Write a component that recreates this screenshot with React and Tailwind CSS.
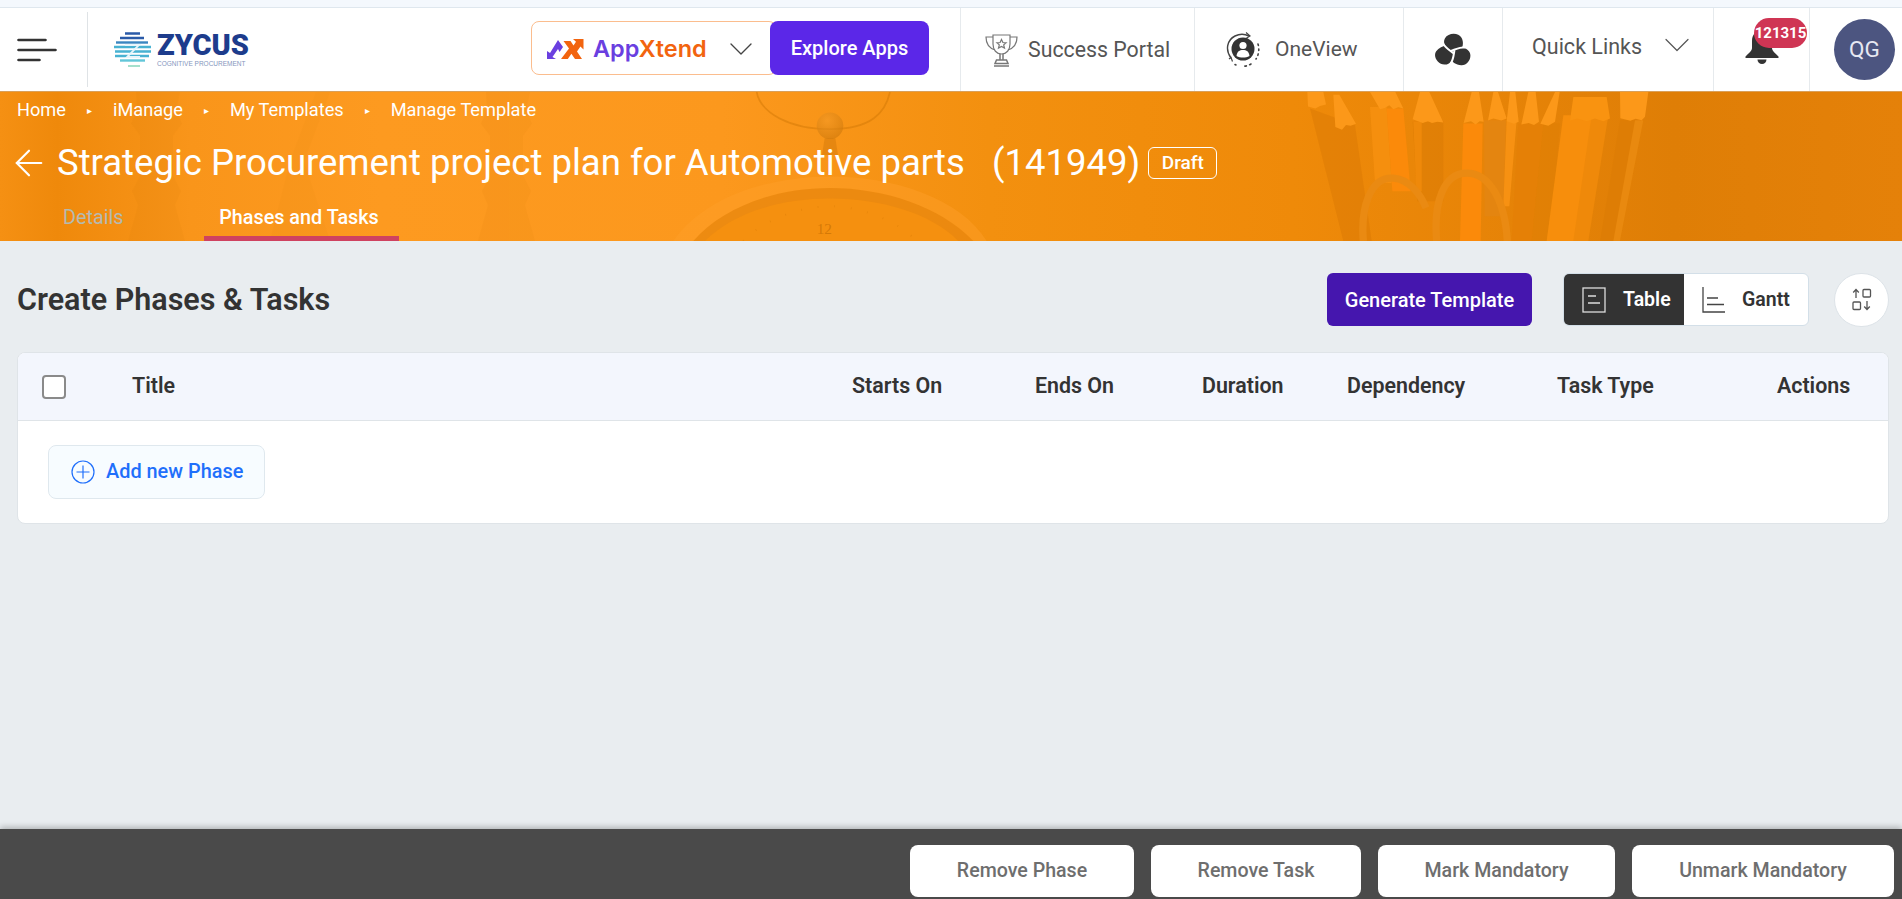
import React from "react";
import { ChevronDown, ArrowLeft } from "lucide-react";

const Hamburger = () => (
  <svg width="40" height="24" viewBox="0 0 40 24" fill="none" stroke="#333" strokeWidth="2.6" strokeLinecap="round">
    <path d="M1.5 2h27M1.5 12h37M1.5 22h21" />
  </svg>
);

const ZycusMark = () => (
  <svg width="38" height="36" viewBox="0 0 38 36" fill="none" strokeWidth="2.4">
    <path d="M11 1.5h15M6 6h24" stroke="#2a5aa8" />
    <path d="M2 10.5h32" stroke="#3a86c0" />
    <path d="M0 15h37M1 19.5h36M1 24h34" stroke="#48b2d2" />
    <path d="M6 28.5h25" stroke="#62c6d8" />
    <path d="M14 34h12" stroke="#a5e0cc" strokeWidth="2" />
    <path d="M11 13h14L13 25h13" stroke="#e8f6fb" strokeWidth="1.8" />
  </svg>
);

const AxMark = () => (
  <svg width="37" height="23" viewBox="0 0 37 23">
    <path d="M0 22V14l3 2L11 3l5 7-3.4 5L11 12 5.5 20 9 22z" fill="#6a3fe0" />
    <path d="M14 22l8-10.5L16.5 4h7l3 4.4L29 4.8 26 2h10.5v10.5L33.4 9.6 30 14.5 35 22h-7l-3.6-5.2L20.8 22z" fill="#f2640f" />
  </svg>
);

const Trophy = () => (
  <svg width="33" height="34" viewBox="0 0 33 34" fill="none" stroke="#777" strokeWidth="1.2">
    <path d="M8 2h17v9c0 6-3.5 10-8.5 10S8 17 8 11z" />
    <path d="M8 4H1c0 7 3 11 9 13M25 4h7c0 7-3 11-9 13" />
    <path d="M16.5 6.5l1.4 3 3.2.3-2.4 2.1.8 3.2-3-1.7-3 1.7.8-3.2-2.4-2.1 3.2-.3z" />
    <path d="M15 21v6h3v-6M11.5 27h10l1.5 3.5H10zM9 33h15" strokeWidth="1.5" />
  </svg>
);

const OneViewIcon = () => (
  <svg width="36" height="36" viewBox="0 0 36 36" fill="none">
    <path d="M6 26C0 18 2 8 10 4c5-2.500 10-2 14 0" stroke="#444" strokeWidth="1.4" />
    <path d="M21 .5L25 4l-4 2.500" stroke="#444" strokeWidth="1.2" />
    <path d="M4 27l2-1.500 1.500 4" stroke="#444" strokeWidth="1.2" />
    <circle cx="18" cy="17" r="11.500" fill="#333" />
    <circle cx="18" cy="13.500" r="3.600" fill="#fff" />
    <path d="M11.500 24c.5-4.500 3-6 6.500-6s6 1.500 6.500 6c-4 2-9 2-13 0z" fill="#fff" />
    <path d="M33 12c1.500 5 .8 11-2 15M26 32c-3 1.800-6 2.400-9 2.200M11 33l-1-.5" stroke="#444" strokeWidth="1.6" strokeDasharray="1.500 3.500" strokeLinecap="round" />
  </svg>
);

const petal = "M18 19.500C11.500 17.500 7 11 10 5.500 13-.5 23.500-1 26.500 5c2.500 4.800 1.500 10.500-1.500 14-2.300-1.800-5-1.500-7 .5z";
const cut = "M18.500 21.500C15 18.500 10.500 16 8 11";
const Swirl = () => (
  <svg width="37" height="34" viewBox="0 0 37 36" preserveAspectRatio="none" fill="#333">
    <path d={petal} />
    <path d={petal} transform="rotate(120 18 19.500)" />
    <path d={petal} transform="rotate(240 18 19.500)" />
    <g fill="none" stroke="#fff" strokeWidth="2">
      <path d={cut} />
      <path d={cut} transform="rotate(120 18 19.500)" />
      <path d={cut} transform="rotate(240 18 19.500)" />
    </g>
  </svg>
);

const Bell = () => (
  <svg width="34" height="34" viewBox="0 0 34 34" fill="#333">
    <path d="M17 0c6.500 0 10 5 10 11v7c0 3 3 5 6.500 8.500V28H.5v-1.500C4 23 7 21 7 18v-7C7 5 10.500 0 17 0z" />
    <path d="M12.500 29.500h9a4.500 4.500 0 0 1-9 0z" />
  </svg>
);

const TableIcon = () => (
  <svg width="24" height="26" viewBox="0 0 24 26" fill="none" stroke="#ddd" strokeWidth="1.300">
    <rect x="1" y="1" width="22" height="24" />
    <path d="M6 9h8M6 16h12" />
  </svg>
);

const GanttIcon = () => (
  <svg width="23" height="26" viewBox="0 0 23 26" fill="none" stroke="#444" strokeWidth="1.300">
    <path d="M1 0v25h22M5 11h11M5 17.500h17" />
  </svg>
);

const SortIcon = () => (
  <svg width="20" height="23" viewBox="0 0 20 23" fill="none" stroke="#555" strokeWidth="1.300">
    <path d="M4 10V2M1.200 4.500L4 1.500l2.800 3" />
    <rect x="11" y="1.500" width="7.500" height="7.500" rx="1" />
    <rect x="1" y="14" width="7.500" height="7.500" rx="1" />
    <path d="M15 13v8M12.200 18.500l2.800 3 2.800-3" />
  </svg>
);

const PlusCircle = () => (
  <svg width="24" height="24" viewBox="0 0 24 24" fill="none" stroke="#1f6ffb" strokeWidth="1.200">
    <circle cx="12" cy="12" r="11" />
    <path d="M12 5.500v13M5.500 12h13" />
  </svg>
);

const BannerArt = () => (
  <svg className="absolute inset-0 h-full w-full" viewBox="0 0 1902 150" preserveAspectRatio="none" fill="none">
    <defs>
      <radialGradient id="knob" cx="0.4" cy="0.3" r="0.8">
        <stop offset="0" stopColor="#f39a28" />
        <stop offset="1" stopColor="#c97408" />
      </radialGradient>
    </defs>
    <g fill="#c96f00" opacity="0.07">
      <path d="M136 0h44l-4 18 6 14-9 12v40l8 16-6 14 10 36H128l10-36-6-14 8-16V44l-9-12 6-14z" />
      <path d="M486 0h44l-4 18 6 14-9 12v40l8 16-6 14 10 36H478l10-36-6-14 8-16V44l-9-12 6-14z" />
      <path d="M290 70l26-70h14l-26 70 26 80h-60z" opacity="0.6" />
    </g>

    {/* clock: coordinates of a 3x crop starting at x=660 */}
    <g transform="translate(660 0) scale(0.33333)">
      <path d="M290 0c12 62 95 112 220 112S676 62 690 0" stroke="#d27806" strokeOpacity="0.5" strokeWidth="5" />
      <path d="M494 140h32l8 50h-48z" fill="#d47a0a" fillOpacity="0.5" />
      <circle cx="510" cy="102" r="40" fill="url(#knob)" fillOpacity="0.6" />
      <path d="M40 450C130 320 320 255 510 255s390 65 470 195z" fill="#ffa02a" fillOpacity="0.45" />
      <path d="M100 450C190 345 350 290 510 290s330 55 430 160z" fill="#e38107" fillOpacity="0.6" />
      <path d="M135 450C220 365 360 322 510 322s300 43 385 128z" fill="#f5900f" />
      <path d="M250 450C300 395 410 345 510 345s210 50 260 105" stroke="#d97c06" strokeOpacity="0.5" strokeWidth="6" strokeDasharray="2 48" />
      <text x="470" y="430" fill="#cd7304" fillOpacity="0.8" fontSize="46" fontFamily="Liberation Serif, serif">12</text>
    </g>

    {/* pencils and clips: coordinates of a 3x crop starting at x=1280 */}
    <g transform="translate(1280 0) scale(0.33333)">
      <path d="M90 50l135 50 50 350H190z" fill="#df7e05" fillOpacity="0.7" />
      <path d="M270 45h50l15 230-50 0z" fill="#fb9412" fillOpacity="0.6" />
      <path d="M320 50h50l22 250h-55z" fill="#fb8a0a" />
      <path d="M398 90h92v240h-78z" fill="#de7d05" fillOpacity="0.75" />
      <path d="M400 90h25v210h-16z" fill="#f8900e" fillOpacity="0.6" />
      <path d="M550 95h58l-6 355h-62z" fill="#fb8a0a" />
      <path d="M612 85h66l-8 290h-56z" fill="#e48510" />
      <path d="M680 85h30l-22 260h-18z" fill="#fb9515" fillOpacity="0.8" />
      <path d="M715 95h75l-35 355h-60z" fill="#e58006" fillOpacity="0.8" />
      <path d="M790 95h50l-30 355h-55z" fill="#e07e05" fillOpacity="0.6" />
      <path d="M850 70h130L920 450H800z" fill="#f78e0c" />
      <path d="M935 70h50l-60 380h-45z" fill="#ef890a" />
      <path d="M1020 85h70l-70 365h-60z" fill="#de7d05" />
      <path d="M1065 85h25l-70 365h-20z" fill="#e9890f" />
      <g fill="#fc9819">
        <path d="M82 0h48l8 38-18 4-14 8-22-6z" />
        <path d="M160 8l18 0 50 88-16 6-14-2-12 14-20-8z" />
        <path d="M270 0h76l24 50-15-4-15 6-12-12-14 8-14 4z" />
        <path d="M420 0h28l42 92-18-2-16 4-12-6-16 6-30-12z" />
        <path d="M575 0h22l14 90-12-2-12 10-14-10-22 6z" />
        <path d="M640 0h14l26 80-16 6-24-6-16 6z" />
        <path d="M690 0h16l10 90-14 6-22-8z" />
        <path d="M745 0h22l10 90-15 10-16-6-22 4z" />
        <path d="M825 0h14l-14 90-20 12-24-6z" />
        <path d="M880 15h100l10 65-20 8-25-8-25 8-28-8-22 6z" fill="#f99310" />
        <path d="M1020 0h85l-10 75-10 10-18-4-16 6-30-8z" />
      </g>
      <path d="M250 450c-8-100 20-195 90-190 45 3 80 45 98 90" stroke="#ea8a12" strokeWidth="22" />
      <path d="M470 450c-10-115 20-205 90-205 70 0 115 85 122 205" stroke="#ea8a12" strokeWidth="22" />
    </g>
  </svg>
);

const columns = ["Starts On", "Ends On", "Duration", "Dependency", "Task Type", "Actions"];
const crumbs = ["Home", "iManage", "My Templates", "Manage Template"];
const footerButtons = [
  ["Remove Phase", "w-[224px]"],
  ["Remove Task", "w-[210px]"],
  ["Mark Mandatory", "w-[237px]"],
  ["Unmark Mandatory", "w-[262px]"],
];

export default function App() {
  return (
    <div className="flex h-screen flex-col overflow-hidden bg-[#e9edf0] font-['Roboto',sans-serif] text-[#333]">
      <div className="h-[8px] shrink-0 border-b border-[#dfe7ee] bg-[#f4f8fd]" />

      <header className="flex h-[83px] shrink-0 items-stretch bg-white">
        <div className="flex w-[87px] items-center pl-[17px]">
          <Hamburger />
        </div>
        <div className="my-[4px] w-px bg-[#dfe3e6]" />
        <div className="flex items-center gap-[5px] pl-[26px]">
          <ZycusMark />
          <div className="flex w-[92px] flex-col">
            <span className="text-[29px] font-black leading-[28px] text-[#1d3c8c]">ZYCUS</span>
            <span className="whitespace-nowrap font-['Liberation_Sans',sans-serif] text-[6.5px] leading-[9px] text-[#8596bd]">COGNITIVE PROCUREMENT</span>
          </div>
        </div>

        <div className="flex-1" />

        <div className="flex items-center pb-[3px] pr-[31px]">
          <div className="flex h-[54px] w-[246px] items-center rounded-[8px] border border-[#fbbd8e] bg-white pl-[15px]">
            <AxMark />
            <span className="ml-[9px] mt-[2px] font-['Inter',sans-serif] text-[23.500px] font-semibold leading-none">
              <span className="text-[#6a3fe0]">App</span>
              <span className="text-[#f2640f]">Xtend</span>
            </span>
            <ChevronDown className="ml-[14px] mt-[2px] shrink-0 text-[#444]" size={40} strokeWidth={0.800} />
          </div>
          <button className="relative z-10 -ml-[7px] h-[54px] w-[159px] rounded-[8px] bg-[#5b27e8] text-[20px] font-medium text-white">
            Explore Apps
          </button>
        </div>

        <div className="flex w-[234px] items-center gap-[10px] border-l border-[#e6eaed] pl-[24px]">
          <Trophy />
          <span className="text-[21.300px] text-[#555]">Success Portal</span>
        </div>
        <div className="flex w-[209px] items-center gap-[14px] border-l border-[#e6eaed] pl-[30px]">
          <OneViewIcon />
          <span className="text-[21px] text-[#555]">OneView</span>
        </div>
        <div className="flex w-[99px] items-center justify-center border-l border-[#e6eaed]">
          <Swirl />
        </div>
        <div className="flex w-[211px] items-center border-l border-[#e6eaed] pb-[4px] pl-[29px]">
          <span className="text-[21.500px] text-[#555]">Quick Links</span>
          <ChevronDown className="-mt-[6px] ml-[13px] shrink-0 text-[#555]" size={44} strokeWidth={0.650} />
        </div>
        <div className="relative flex w-[96px] items-center border-l border-[#e6eaed] pb-[6px] pl-[31px]">
          <Bell />
          <span className="absolute left-[40px] top-[10px] flex h-[30px] w-[53px] items-center justify-center rounded-full bg-[#cf3554] text-[15px] font-bold text-white">
            121315
          </span>
        </div>
        <div className="flex w-[93px] items-center border-l border-[#e6eaed] pl-[24px]">
          <div className="flex h-[61px] w-[61px] items-center justify-center rounded-full bg-[#4c5580] text-[22.500px] text-[#e6e8f2]">
            QG
          </div>
        </div>
      </header>

      <section className="relative h-[150px] shrink-0 overflow-hidden border-t border-[#d9a05a] bg-[linear-gradient(90deg,#f59013_0%,#ef890b_3%,#f9951a_10%,#fd9a20_20%,#fc981d_38%,#f3900f_52%,#ef8a09_68%,#df7e06_88%,#e58109_100%)] pl-[17px] text-white">
        <BannerArt />
        <div className="relative flex flex-col">
          <nav className="flex h-[37px] items-center text-[18.200px] leading-none">
            {crumbs.map((c, i) => (
              <React.Fragment key={c}>
                {i > 0 && <span className="mx-[21px] text-[10px]">▸</span>}
                <span>{c}</span>
              </React.Fragment>
            ))}
          </nav>
          <div className="mt-[9px] flex h-[50px] items-center">
            <ArrowLeft size={42} strokeWidth={1.250} className="-ml-[9px] shrink-0" />
            <h1 className="ml-[7px] whitespace-pre text-[36.500px] leading-none">
              Strategic Procurement project plan for Automotive parts{"   "}(141949)
            </h1>
            <span className="ml-[8px] flex h-[32px] w-[69px] items-center justify-center rounded-[6px] border border-white text-[19px] font-medium">
              Draft
            </span>
          </div>
          <div className="flex h-[53px] items-end text-[19.800px]">
            <div className="flex h-[41px] w-[187px] items-center pb-[5px] pl-[46px] text-[#b5bab0]">Details</div>
            <div className="flex h-[41px] w-[195px] items-center justify-center border-b-[5px] border-[#cf4260] pr-[5px] font-medium">
              Phases and Tasks
            </div>
          </div>
        </div>
      </section>

      <main className="flex-1 pl-[17px] pr-[13px] pt-[32px]">
        <div className="flex h-[53px] items-center">
          <h2 className="text-[30.500px] font-semibold">Create Phases &amp; Tasks</h2>
          <div className="flex-1" />
          <button className="h-[53px] w-[205px] rounded-[6px] bg-[#4516ae] text-[20px] font-medium text-white">
            Generate Template
          </button>
          <div className="ml-[31px] flex h-[53px] w-[246px] overflow-hidden rounded-[6px] border border-[#d3dfe8] bg-white">
            <div className="flex w-[120px] items-center gap-[17px] bg-[#333] pl-[18px] text-[19.500px] font-semibold text-white">
              <TableIcon />
              <span>Table</span>
            </div>
            <div className="flex flex-1 items-center gap-[17px] pl-[18px] text-[19.500px] font-semibold">
              <GanttIcon />
              <span>Gantt</span>
            </div>
          </div>
          <div className="ml-[25px] flex h-[54px] w-[55px] items-center justify-center rounded-full border border-[#dde3e8] bg-white">
            <SortIcon />
          </div>
        </div>

        <div className="mt-[26px] overflow-hidden rounded-[8px] border border-[#dfe4e8] bg-white">
          <div className="grid h-[68px] grid-cols-[114px_720px_183px_167px_145px_210px_220px_1fr] items-center border-b border-[#dfe4e8] bg-[#f3f6fd] text-[21.400px] font-semibold">
            <div className="pl-[24px]">
              <div className="h-[24px] w-[24px] rounded-[4px] border-2 border-[#8a8a8a] bg-white" />
            </div>
            <div>Title</div>
            {columns.map((c) => (
              <div key={c}>{c}</div>
            ))}
          </div>
          <div className="h-[102px] pl-[30px] pt-[24px]">
            <button className="flex h-[54px] w-[217px] items-center gap-[11px] rounded-[8px] border border-[#dfe8ee] bg-[#f7fcff] pl-[22px] text-[19.900px] font-medium text-[#1f6ffb]">
              <PlusCircle />
              <span>Add new Phase</span>
            </button>
          </div>
        </div>
      </main>

      <footer className="flex h-[70px] shrink-0 items-start justify-end gap-[17px] bg-[#4a4a4a] pr-[8px] pt-[16px] shadow-[0_-2px_6px_rgba(0,0,0,0.25)]">
        {footerButtons.map(([label, width]) => (
          <button key={label} className={`h-[52px] ${width} rounded-[8px] bg-white text-[19.600px] font-medium text-[#6e6e6e]`}>
            {label}
          </button>
        ))}
      </footer>
    </div>
  );
}
